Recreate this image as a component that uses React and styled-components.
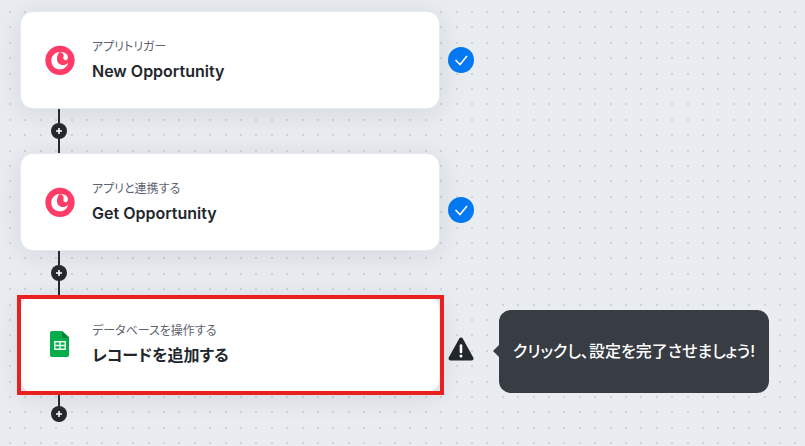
import React from "react";
import styled, { createGlobalStyle } from "styled-components";

const steps = [15, 31, 46, 62, 0];
const dots = steps
  .flatMap((x) => steps.map((y) => `<rect x='${x}' y='${y}' width='2' height='2'/>`))
  .join("");
const dotTile = encodeURIComponent(
  `<svg xmlns='http://www.w3.org/2000/svg' width='77' height='77' fill='#d0d3d8'>${dots}</svg>`
);

const GlobalStyle = createGlobalStyle`
  * { box-sizing: border-box; }
  body {
    margin: 0;
    font-family: Inter, "Noto Sans CJK JP", sans-serif;
    font-feature-settings: "palt";
    color: #22262d;
    background-color: #e9ecf1;
    background-image: url("data:image/svg+xml,${dotTile}");
    background-position: 9px 11px;
  }
  h2, p { margin: 0; }
`;

const Canvas = styled.main`
  padding: 11px 20px 24px;
`;

const Step = styled.section`
  display: flex;
  align-items: center;
  gap: 8px;
`;

const Card = styled.article`
  position: relative;
  flex: 0 1 420px;
  height: 98px;
  display: flex;
  align-items: center;
  gap: 17px;
  padding: 0 24px;
  border: 1px solid #e6e9ee;
  border-radius: 13px;
  background: #fff;
  box-shadow: 0 4px 28px rgba(34, 45, 60, 0.1);
`;

const Highlight = styled.span`
  position: absolute;
  inset: -1px -5px -3px -4px;
  border: 4px solid #e82020;
  pointer-events: none;
`;

const AppIcon = styled.svg`
  flex: none;
  width: 30px;
  height: 30px;
`;

const CardText = styled.div`
  display: flex;
  flex-direction: column;
  gap: 2px;
`;

const Kind = styled.p`
  font-size: 12px;
  line-height: 20px;
  color: #5d6470;
`;

const Title = styled.h2`
  font-size: 16px;
  line-height: 24px;
  font-weight: 600;
`;

const Status = styled.span`
  flex: none;
  display: flex;
  padding-top: ${(p) => p.$drop || 0}px;
`;

const Link = styled.div`
  display: flex;
  align-items: ${(p) => (p.$last ? "flex-end" : "center")};
  width: 16px;
  height: ${(p) => (p.$last ? "29px" : "44px")};
  margin-left: 31px;
  background: linear-gradient(#262a30, #262a30) center / 2px 100% no-repeat;
`;

const AddButton = styled.button`
  display: flex;
  width: 16px;
  height: 16px;
  padding: 0;
  border: 0;
  border-radius: 50%;
  background: #262a30;
  cursor: pointer;
`;

const Tip = styled.div`
  position: relative;
  margin-top: 14px;
  margin-left: 17px;
  padding: 28px 14px;
  border-radius: 12px;
  background: #383c43;
  color: #fff;
  font-size: 16px;
  line-height: 27px;
  font-weight: 500;
  &::before {
    content: "";
    position: absolute;
    left: -6px;
    top: 50%;
    margin-top: -6px;
    border: solid transparent;
    border-width: 6px 6px 6px 0;
    border-right-color: #383c43;
  }
`;

function CopperIcon() {
  return (
    <AppIcon viewBox="0 0 90 90" aria-hidden="true">
      <circle cx="45" cy="46" r="44" fill="#ff3b67" />
      <path
        fill="#fff"
        d="M44 21C29 22 19 33 19 47c0 15 11 26 26 26 12 0 22-8 24-20-4 4-9 7-15 7-11 0-18-7-18-18 0-9 3-16 8-21Z"
      />
      <path fill="#fff" d="M44 21c10-1 19 3 23 9 3 6 2 12-2 15-5 2-10-1-10-6 0-3 1-5 1-8 0-5-5-8-12-10Z" />
    </AppIcon>
  );
}

function SheetsIcon() {
  return (
    <AppIcon viewBox="0 0 30 30" aria-hidden="true">
      <path fill="#03ad4b" d="M7 2h10l7 6v18a2 2 0 0 1-2 2H7a2 2 0 0 1-2-2V4a2 2 0 0 1 2-2Z" />
      <path fill="#078439" d="M17 2l7 7h-6a1 1 0 0 1-1-1Z" />
      <path fill="#e9f8ee" fillRule="evenodd" d="M9 12h12v9H9Zm1.5 1.5v2.3h3.8v-2.3Zm5.2 0v2.3h3.8v-2.3Zm-5.2 3.7v2.3h3.8v-2.3Zm5.2 0v2.3h3.8v-2.3Z" />
    </AppIcon>
  );
}

function Done({ drop }) {
  return (
    <Status $drop={drop}>
      <svg width="26" height="26" viewBox="0 0 26 26" role="img" aria-label="完了">
        <circle cx="13" cy="13" r="13" fill="#0379f4" />
        <path d="M7.5 13l4.5 4.5 7-8.5" fill="none" stroke="#fff" strokeWidth="1.6" />
      </svg>
    </Status>
  );
}

function Warning({ drop }) {
  return (
    <Status $drop={drop}>
      <svg width="26" height="26" viewBox="0 0 26 26" role="img" aria-label="未完了">
        <path d="M13 3.5L23.5 22.5H2.5Z" fill="#23272e" stroke="#23272e" strokeWidth="4" strokeLinejoin="round" />
        <path d="M13 9.5v6.5" stroke="#fff" strokeWidth="2.6" strokeLinecap="round" />
        <circle cx="13" cy="20" r="1.5" fill="#fff" />
      </svg>
    </Status>
  );
}

function Connector({ last }) {
  return (
    <Link $last={last}>
      <AddButton type="button" aria-label="ステップを追加">
        <svg width="16" height="16" viewBox="0 0 16 16">
          <path d="M8 5v6M5 8h6" stroke="#fff" strokeWidth="1.6" />
        </svg>
      </AddButton>
    </Link>
  );
}

function StepCard({ icon, kind, title, highlighted }) {
  return (
    <Card>
      {icon}
      <CardText>
        <Kind>{kind}</Kind>
        <Title>{title}</Title>
      </CardText>
      {highlighted && <Highlight />}
    </Card>
  );
}

export default function App() {
  return (
    <>
      <GlobalStyle />
      <Canvas lang="ja">
        <Step>
          <StepCard icon={<CopperIcon />} kind="アプリトリガー" title="New Opportunity" />
          <Done />
        </Step>
        <Connector />
        <Step>
          <StepCard icon={<CopperIcon />} kind="アプリと連携する" title="Get Opportunity" />
          <Done drop={16} />
        </Step>
        <Connector />
        <Step>
          <StepCard icon={<SheetsIcon />} kind="データベースを操作する" title="レコードを追加する" highlighted />
          <Warning drop={10} />
          <Tip role="status">クリックし、設定を完了させましょう!</Tip>
        </Step>
        <Connector last />
      </Canvas>
    </>
  );
}
